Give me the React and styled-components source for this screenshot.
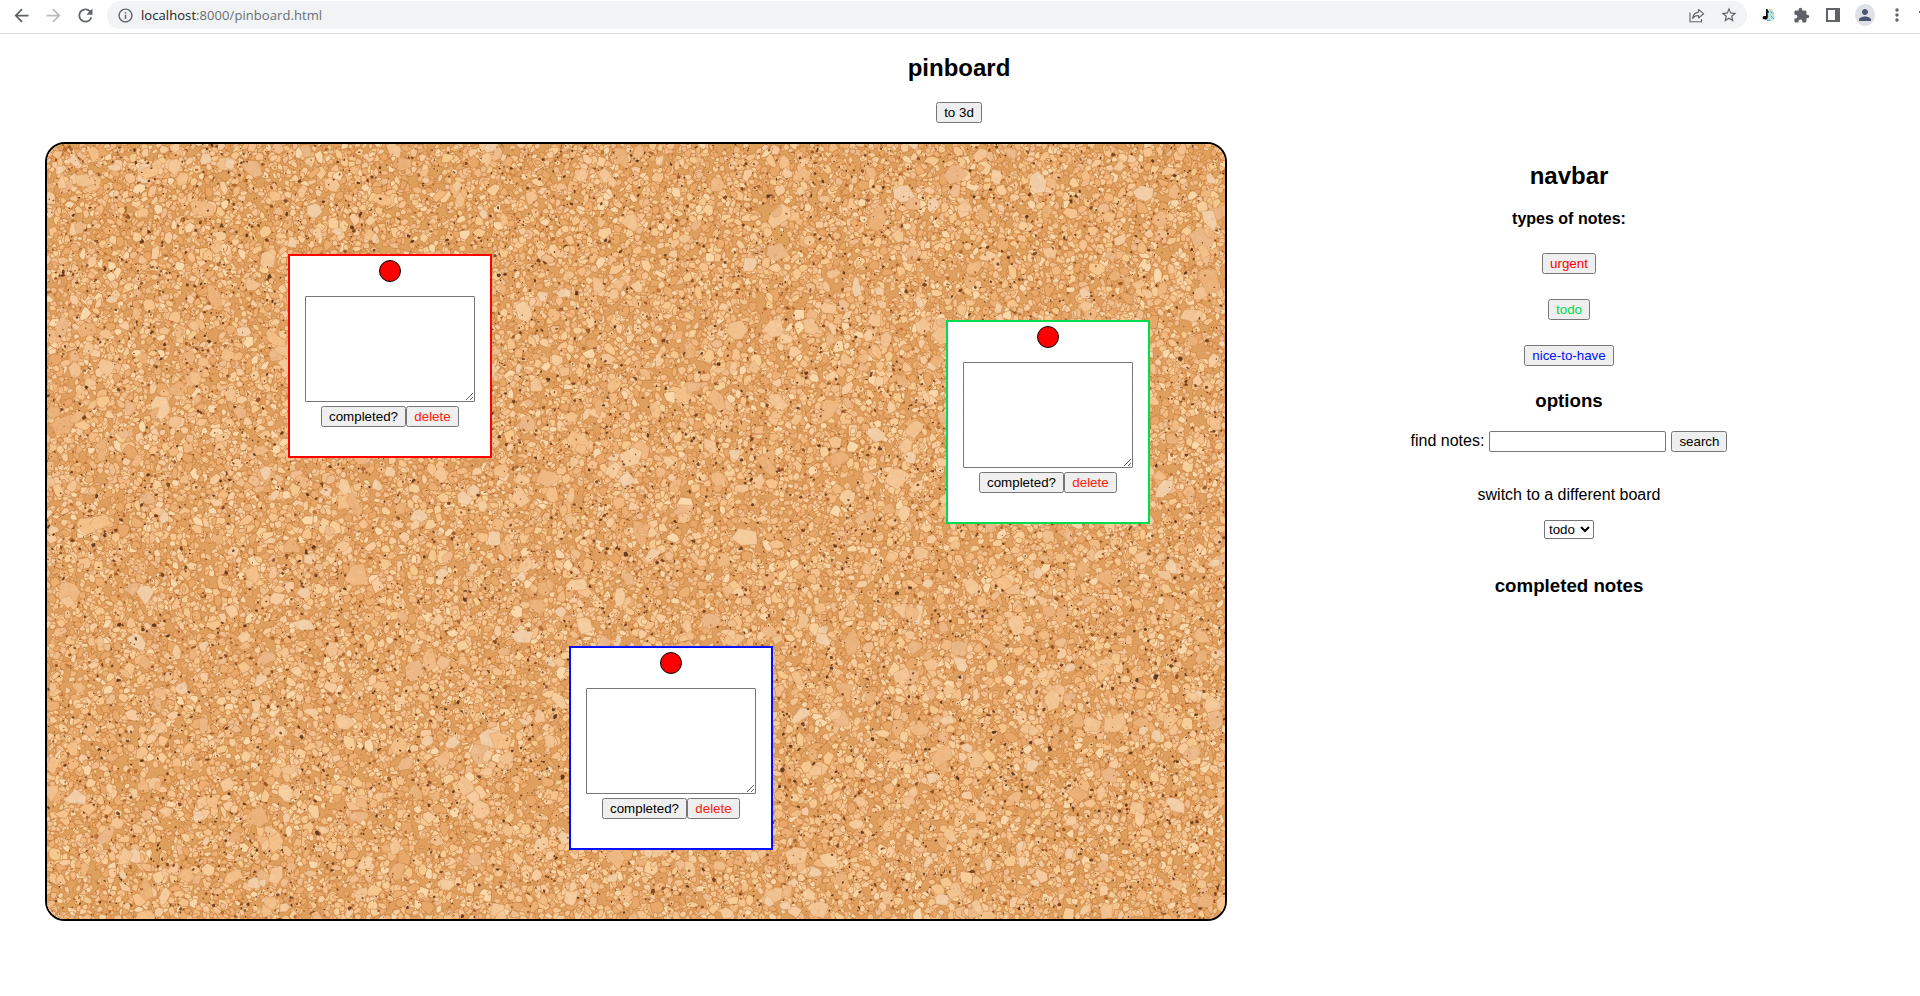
import React from "react";
import styled, { createGlobalStyle } from "styled-components";
import {
  MdArrowBack,
  MdArrowForward,
  MdRefresh,
  MdInfoOutline,
  MdStarBorder,
  MdExtension,
  MdPerson,
  MdMoreVert,
} from "react-icons/md";

const GlobalStyle = createGlobalStyle`
  * { box-sizing: border-box; }
  body {
    margin: 0;
    background: #fff;
    color: #000;
    font: 16px/18px "Liberation Sans", Arial, sans-serif;
    overflow: hidden;
  }
  h2, h3, h4, p { margin: 0; }
`;

const Toolbar = styled.header`
  display: flex;
  align-items: flex-start;
  height: 34px;
  padding-left: 5px;
  border-bottom: 1px solid #dadce0;
  overflow: hidden;
`;
const ToolIcon = styled.span`
  display: flex;
  align-items: center;
  justify-content: center;
  flex: none;
  width: ${(p) => p.$w || 32}px;
  height: 30px;
  color: ${(p) => p.$color || "#5f6368"};
  svg { display: block; }
`;
const Omnibox = styled.div`
  display: flex;
  align-items: center;
  width: 1640px;
  height: 28px;
  margin: 1px 0 0 6px;
  padding: 0 2px 0 9px;
  border-radius: 14px;
  background: #f1f3f4;
`;
const Url = styled.span`
  flex: 1;
  margin-left: 7px;
  font: 13px/18px "Open Sans", "Noto Sans", sans-serif;
  letter-spacing: 0.07px;
  color: #6a6e73;
  b { font-weight: 400; color: #202124; }
`;
const Avatar = styled.span`
  display: flex;
  align-items: center;
  justify-content: center;
  width: 22px;
  height: 22px;
  border-radius: 50%;
  background: #dee1e6;
  color: #4a5670;
`;
const WindowEdge = styled.span`
  width: 1px;
  height: 2px;
  margin: 11px 0 0 auto;
  background: #5f6368;
`;

const PageHeader = styled.div`
  display: flex;
  flex-direction: column;
  align-items: center;
  height: 108px;
  padding: 20px 2px 0 0;
`;
const Title = styled.h2`
  font-size: 24px;
  line-height: 28px;
`;
const Button = styled.button`
  height: 21px;
  padding: 1px 6px;
  border: 1px solid #767676;
  border-radius: 2.5px;
  background: #efefef;
  color: ${(p) => p.$color || "#000"};
  font: 13.333px/15px "Liberation Sans", Arial, sans-serif;
  white-space: nowrap;
  width: ${(p) => (p.$w ? `${p.$w}px` : "auto")};
`;
const HeaderButton = styled(Button)`
  margin-top: 20px;
`;

const Main = styled.main`
  display: flex;
  padding: 0 9px 0 45px;
`;
const Board = styled.section`
  position: relative;
  flex: none;
  width: 1182px;
  height: 779px;
  border: 2px solid #000;
  border-radius: 20px;
  overflow: hidden;
  background: #dfa05f;
`;
const CorkSvg = styled.svg`
  display: block;
`;
const NoteCard = styled.article`
  position: absolute;
  left: ${(p) => p.$x}px;
  top: ${(p) => p.$y}px;
  display: flex;
  flex-direction: column;
  align-items: center;
  width: 204px;
  height: 204px;
  padding-top: 4px;
  border: 2px solid ${(p) => p.$color};
  background: #fff;
`;
const Pin = styled.span`
  width: 22px;
  height: 22px;
  border: 1px solid #000;
  border-radius: 50%;
  background: #f00;
`;
const NoteText = styled.textarea`
  display: block;
  width: 170px;
  height: 106px;
  margin: 14px 0 4px;
  border: 1px solid #767676;
  border-radius: 1px;
  background: #fff;
`;
const NoteActions = styled.div`
  display: flex;
`;

const Navbar = styled.nav`
  display: flex;
  flex: 1;
  flex-direction: column;
  align-items: center;
  padding-top: 20px;
`;
const TypesHeading = styled.h4`
  margin-top: 20px;
  font-size: 16px;
  line-height: 18px;
`;
const TypeList = styled.div`
  display: flex;
  flex-direction: column;
  align-items: center;
  gap: 25px;
  margin-top: 25px;
`;
const SectionHeading = styled.h3`
  margin-top: ${(p) => p.$top}px;
  font-size: 18.72px;
  line-height: 22px;
`;
const SearchRow = styled.label`
  display: flex;
  align-items: center;
  margin-top: 19px;
`;
const SearchCaption = styled.span`
  padding-bottom: 2px;
`;
const SearchInput = styled.input`
  width: 177px;
  height: 21px;
  margin: 0 5px 0 5px;
  border: 1px solid #767676;
  border-radius: 2px;
  background: #fff;
`;
const SwitchLabel = styled.p`
  margin-top: 34px;
`;
const BoardSelect = styled.select`
  width: 50px;
  height: 19px;
  margin-top: 16px;
  padding: 0;
  border: 1px solid #767676;
  border-radius: 2px;
  background: #fff;
  color: #000;
  font: 13.333px "Liberation Sans", Arial, sans-serif;
`;

/* Cork grain: seeded random chips, scattered in layers from fine to coarse. */
const CORK_W = 1178;
const CORK_H = 775;

function makeRandom(seed) {
  let s = seed;
  return () => {
    s = (s + 0x6d2b79f5) | 0;
    let t = Math.imul(s ^ (s >>> 15), 1 | s);
    t = (t + Math.imul(t ^ (t >>> 7), 61 | t)) ^ t;
    return ((t ^ (t >>> 14)) >>> 0) / 4294967296;
  };
}

function chip(rand, x, y, r) {
  const n = 5 + Math.floor(rand() * 3);
  const turn = rand() * Math.PI;
  const squash = 0.55 + rand() * 0.4;
  const cos = Math.cos(turn);
  const sin = Math.sin(turn);
  const pts = [];
  for (let i = 0; i < n; i++) {
    const a = ((i + rand() * 0.6) / n) * Math.PI * 2;
    const d = r * (0.7 + rand() * 0.5);
    const px = Math.cos(a) * d;
    const py = Math.sin(a) * d * squash;
    pts.push(`${(x + px * cos - py * sin).toFixed(1)} ${(y + px * sin + py * cos).toFixed(1)}`);
  }
  return `M${pts.join("L")}Z`;
}

const CHIP_COLORS = ["#f6c48b", "#f2ba80", "#f8ce98", "#edb074", "#f7cb9e", "#f0bd8d", "#fad8a9", "#e8a869", "#f5c18c", "#f6c88e"];
const COARSE_COLORS = ["#f5c28b", "#f6c999", "#f1bb86", "#f7d0a2", "#edb98a", "#f3c593", "#ecb37b", "#f3d2ae"];
const SPECK_COLORS = ["#6b3515", "#8c4a1c", "#a8602a", "#4f2813", "#b8682c"];

function makeLayer(rand, batches, perBatch, min, max, colors) {
  return Array.from({ length: batches }, () => {
    let d = "";
    for (let i = 0; i < perBatch; i++) {
      d += chip(rand, rand() * CORK_W, rand() * CORK_H, min + (max - min) * rand() * rand());
    }
    return { d, fill: colors[Math.floor(rand() * colors.length)] };
  });
}

const random = makeRandom(4217);
const FINE = makeLayer(random, 320, 100, 3.2, 7.5, CHIP_COLORS);
const SPECKS = makeLayer(random, 80, 110, 0.8, 3, SPECK_COLORS);
const MEDIUM = makeLayer(random, 200, 42, 3.2, 9, CHIP_COLORS);
const COARSE = makeLayer(random, 100, 9, 6, 15, COARSE_COLORS);
const TOP_SPECKS = makeLayer(random, 50, 80, 0.7, 2.4, SPECK_COLORS);

function Layer({ items, stroke, width, opacity = 1 }) {
  return (
    <g stroke={stroke} strokeWidth={width} strokeOpacity="0.6" opacity={opacity}>
      {items.map((item, i) => (
        <path key={i} d={item.d} fill={item.fill} />
      ))}
    </g>
  );
}

const Cork = React.memo(function Cork() {
  return (
    <CorkSvg width={CORK_W} height={CORK_H} viewBox={`0 0 ${CORK_W} ${CORK_H}`} aria-hidden="true">
      <rect width={CORK_W} height={CORK_H} fill="#dfa05f" />
      <Layer items={FINE} stroke="#b96d2e" width="0.7" />
      <Layer items={SPECKS} stroke="none" width="0" opacity={0.85} />
      <Layer items={MEDIUM} stroke="#b0642a" width="0.7" />
      <Layer items={COARSE} stroke="#c98445" width="0.6" opacity={0.9} />
      <Layer items={TOP_SPECKS} stroke="none" width="0" opacity={0.85} />
    </CorkSvg>
  );
});

const ShareIcon = () => (
  <svg width="16" height="15" viewBox="0 0 16 15" fill="none" stroke="currentColor" strokeWidth="1.1">
    <path d="M1 4.5V13.8H12.5V11" />
    <path d="M9.5 1.5L14.7 5.8L9.5 10V7.5C6.8 7.4 5 8.3 3.7 10.5C4.1 6.8 6 4.6 9.5 4.1Z" strokeLinejoin="round" />
  </svg>
);
const PanelIcon = () => (
  <svg width="14" height="14" viewBox="0 0 14 14">
    <path d="M0 0H14V14H0ZM2 2V12H9V2Z" fill="currentColor" fillRule="evenodd" />
  </svg>
);
const MusicIcon = () => (
  <svg width="14" height="14" viewBox="0 0 14 14">
    <path d="M5 2L10 1L12 5L12 12L8 13L3 12Z" fill="#a9e1f7" />
    <path d="M7 1L10.5 3M8 5L11 7M6 9L10 12" stroke="#f7e08a" strokeWidth="1.4" />
    <path d="M8.5 3L10.5 6M9 8L12 11M5 12.4H8" stroke="#35b4ea" strokeWidth="1" />
    <path d="M4 1H5.5C5.5 2.5 7 3 7 5L5.7 4.2V9.5C5.7 11 4.5 11.5 3 11.5S0.5 10.7 0.5 9.5S2 7.6 4 8Z" fill="#000" />
  </svg>
);

function Note({ x, y, color }) {
  return (
    <NoteCard $x={x} $y={y} $color={color}>
      <Pin />
      <NoteText />
      <NoteActions>
        <Button $w={85}>completed?</Button>
        <Button $w={53} $color="#ff1a0a">delete</Button>
      </NoteActions>
    </NoteCard>
  );
}

const NOTES = [
  { x: 241, y: 110, color: "#ff0000" },
  { x: 899, y: 176, color: "#00dc50" },
  { x: 522, y: 502, color: "#0010ff" },
];

export default function App() {
  return (
    <>
      <GlobalStyle />
      <Toolbar>
        <ToolIcon><MdArrowBack size={21} /></ToolIcon>
        <ToolIcon $color="#babcbe"><MdArrowForward size={21} /></ToolIcon>
        <ToolIcon><MdRefresh size={21} /></ToolIcon>
        <Omnibox>
          <ToolIcon $w={18}><MdInfoOutline size={17} /></ToolIcon>
          <Url><b>localhost</b>:8000/pinboard.html</Url>
          <ToolIcon><ShareIcon /></ToolIcon>
          <ToolIcon><MdStarBorder size={18} /></ToolIcon>
        </Omnibox>
        <ToolIcon $w={44}><MusicIcon /></ToolIcon>
        <ToolIcon $w={20}><MdExtension size={17} /></ToolIcon>
        <ToolIcon $w={44}><PanelIcon /></ToolIcon>
        <ToolIcon $w={20}><Avatar><MdPerson size={18} /></Avatar></ToolIcon>
        <ToolIcon $w={44}><MdMoreVert size={20} /></ToolIcon>
        <WindowEdge />
      </Toolbar>
      <PageHeader>
        <Title>pinboard</Title>
        <HeaderButton $w={46}>to 3d</HeaderButton>
      </PageHeader>
      <Main>
        <Board>
          <Cork />
          {NOTES.map((note) => (
            <Note key={note.color} {...note} />
          ))}
        </Board>
        <Navbar>
          <Title>navbar</Title>
          <TypesHeading>types of notes:</TypesHeading>
          <TypeList>
            <Button $w={54} $color="#ff0000">urgent</Button>
            <Button $w={42} $color="#00dc50">todo</Button>
            <Button $w={90} $color="#0010ff">nice-to-have</Button>
          </TypeList>
          <SectionHeading $top={24}>options</SectionHeading>
          <SearchRow>
            <SearchCaption>find notes:</SearchCaption>
            <SearchInput />
            <Button $w={56}>search</Button>
          </SearchRow>
          <SwitchLabel>switch to a different board</SwitchLabel>
          <BoardSelect defaultValue="todo">
            <option value="todo">todo</option>
          </BoardSelect>
          <SectionHeading $top={36}>completed notes</SectionHeading>
        </Navbar>
      </Main>
    </>
  );
}
